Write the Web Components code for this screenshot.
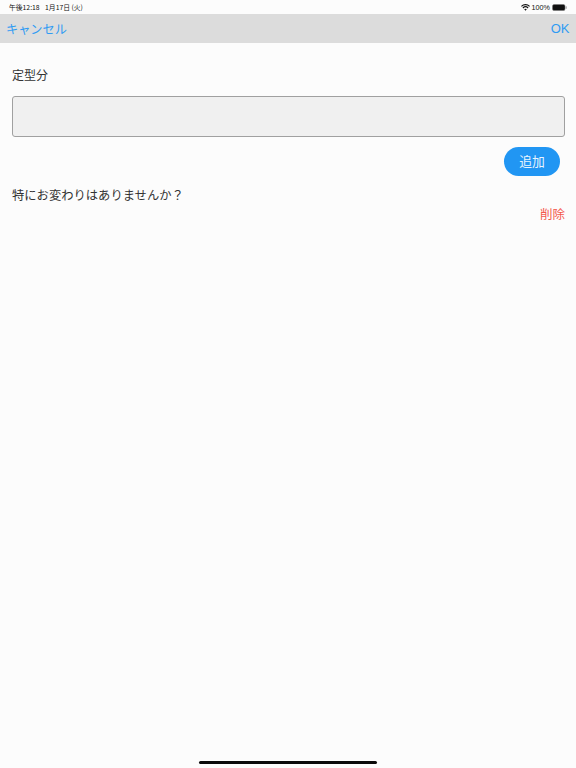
<!DOCTYPE html>
<html lang="ja">
<head>
<meta charset="utf-8">
<title>定型分</title>
<style>
html, body { margin: 0; height: 100%; background: #fcfcfc; }
body { font-family: "Noto Sans CJK JP", "Liberation Sans", sans-serif; }
</style>
</head>
<body>
<phrase-app>
    <status-bar slot="status" time="午後12:18" date="1月17日 (火)" battery="100%"></status-bar>
    <nav-bar slot="nav" cancel="キャンセル" ok="OK"></nav-bar>
    <phrase-editor label="定型分" action="追加">
        <phrase-row remove="削除">特にお変わりはありませんか？</phrase-row>
    </phrase-editor>
</phrase-app>

<script>
class PhraseApp extends HTMLElement {
    constructor() {
        super();
        this.attachShadow({ mode: 'open' });
        this.shadowRoot.innerHTML = `
            <style>
                :host { display: flex; flex-direction: column; height: 768px; overflow: hidden; background: #fcfcfc; }
                main { flex: 1; min-height: 0; }
                .home { display: flex; justify-content: center; padding-bottom: 4px; }
                .home i { display: block; width: 178px; height: 3px; border-radius: 2px; background: #0a0a0a; }
            </style>
            <slot name="status"></slot>
            <slot name="nav"></slot>
            <main><slot></slot></main>
            <div class="home"><i></i></div>
        `;
    }
}

class StatusBar extends HTMLElement {
    constructor() {
        super();
        this.attachShadow({ mode: 'open' });
    }

    connectedCallback() {
        this.shadowRoot.innerHTML = `
            <style>
                :host { display: flex; justify-content: space-between; align-items: center; height: 14px; padding: 0 9px; background: #fcfcfc; color: #111; font-size: 6.8px; line-height: 14px; }
                .left { display: flex; gap: 5.5px; }
                .right { display: flex; align-items: center; gap: 2px; }
                .pct { font-family: "Liberation Sans", sans-serif; font-size: 7.2px; padding-top: 1px; }
                svg { display: block; }
            </style>
            <div class="left"><span>${this.getAttribute('time')}</span><span>${this.getAttribute('date')}</span></div>
            <div class="right">
                <svg width="9" height="7" viewBox="0 0 18 14"><path d="M9 13.5 6.4 10.6a3.7 3.7 0 0 1 5.2 0zM4.6 8.8 3 7a8.6 8.6 0 0 1 12 0l-1.6 1.8a6.2 6.2 0 0 0-8.800 0zM1.700 5.600 0 3.800a13 13 0 0 1 18 0l-1.700 1.800a10.500 10.500 0 0 0-14.600 0z" fill="#111"/></svg>
                <span class="pct">${this.getAttribute('battery')}</span>
                <svg width="15" height="7" viewBox="0 0 15 7"><rect x=".5" y=".5" width="12.500" height="6" rx="1.500" fill="#111" stroke="#777" stroke-width=".5"/><rect x="13.600" y="2.300" width="1" height="2.400" rx=".5" fill="#888"/></svg>
            </div>
        `;
    }
}

class NavBar extends HTMLElement {
    constructor() {
        super();
        this.attachShadow({ mode: 'open' });
    }

    connectedCallback() {
        this.shadowRoot.innerHTML = `
            <style>
                :host { display: flex; justify-content: space-between; align-items: center; height: 29px; padding: 0 6.500px 0 6px; background: #dcdcdc; color: #2f9bf3; font-size: 12.2px; }
                .ok { font-family: "Liberation Sans", sans-serif; font-size: 13px; }
            </style>
            <span>${this.getAttribute('cancel')}</span>
            <span class="ok">${this.getAttribute('ok')}</span>
        `;
    }
}

class PhraseEditor extends HTMLElement {
    constructor() {
        super();
        this.attachShadow({ mode: 'open' });
    }

    connectedCallback() {
        this.shadowRoot.innerHTML = `
            <style>
                :host { display: block; padding: 23px 11px 0 11.500px; color: #333; }
                label { display: block; font-size: 12px; line-height: 18px; padding-left: .5px; }
                input { display: block; box-sizing: border-box; width: 100%; height: 41px; margin: 12px 0 0; padding: 0 8px; border: 1px solid #a0a0a0; border-radius: 3px; background: #f0f0f0; outline: none; }
                .actions { display: flex; justify-content: flex-end; padding: 10px 5px 0 0; }
                button { width: 56px; height: 29px; padding: 0 0 2px; border: none; border-radius: 15px; background: #2196f3; color: #e8f4fe; font: inherit; font-size: 12.800px; }
            </style>
            <label for="phrase">${this.getAttribute('label')}</label>
            <input id="phrase" type="text">
            <div class="actions"><button type="button">${this.getAttribute('action')}</button></div>
            <slot></slot>
        `;
    }
}

class PhraseRow extends HTMLElement {
    constructor() {
        super();
        this.attachShadow({ mode: 'open' });
    }

    connectedCallback() {
        this.shadowRoot.innerHTML = `
            <style>
                :host { display: block; padding: 10px 0 0 .5px; font-size: 12.300px; line-height: 19px; color: #333; }
                .remove { display: flex; justify-content: flex-end; margin-top: -1px; font-size: 12.500px; color: #f4574b; }
            </style>
            <div><slot></slot></div>
            <div class="remove"><span>${this.getAttribute('remove')}</span></div>
        `;
    }
}

customElements.define('phrase-app', PhraseApp);
customElements.define('status-bar', StatusBar);
customElements.define('nav-bar', NavBar);
customElements.define('phrase-editor', PhraseEditor);
customElements.define('phrase-row', PhraseRow);
</script>
</body>
</html>
